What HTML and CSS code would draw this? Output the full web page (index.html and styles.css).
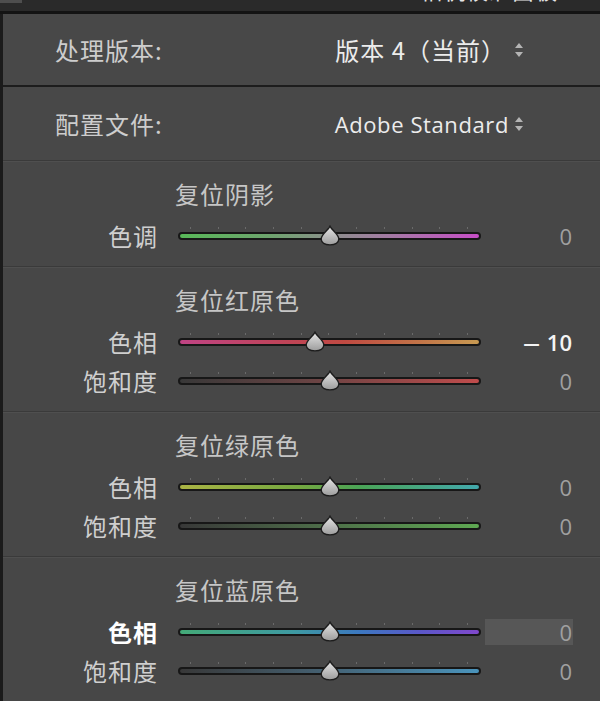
FILE: index.html
```html
<!DOCTYPE html>
<html lang="zh-CN">
<head>
<meta charset="utf-8">
<title>校准</title>
<link rel="stylesheet" href="styles.css">
</head>
<body>
<div class="app">
  <header class="topbar">
    <span class="corner"></span>
    <span class="top-title">相机校准面板</span>
  </header>
  <div class="panel">
    <div class="setting first">
      <span class="setting-label">处理版本:</span>
      <span class="setting-value">版本 4（当前）<svg class="updown" viewBox="0 0 10 16" width="10" height="16"><path d="M5 1 L9 6 H1 Z M5 15 L9 10 H1 Z" fill="#b4b4b4"/></svg></span>
    </div>
    <div class="setting second">
      <span class="setting-label">配置文件:</span>
      <span class="setting-value latin">Adobe Standard<svg class="updown tight" viewBox="0 0 10 16" width="10" height="16"><path d="M5 1 L9 6 H1 Z M5 15 L9 10 H1 Z" fill="#b4b4b4"/></svg></span>
    </div>

    <section class="group g1">
      <div class="group-title">复位阴影</div>
      <div class="row">
        <span class="label">色调</span>
        <div class="slider">
          <div class="ticks"><i></i><i></i><i></i><i></i><i></i><i></i><i></i><i></i><i></i><i></i><i></i></div>
          <div class="track tint">
            <svg class="thumb" style="left:50%" viewBox="0 0 22 21" width="22" height="21"><defs><linearGradient id="tg1" x1="0" y1="0" x2="0" y2="1"><stop offset="0" stop-color="#e6e6e6"/><stop offset="1" stop-color="#9c9c9c"/></linearGradient></defs><path d="M11 1.2 C12.6 5 19.8 9.2 19.8 14 C19.8 17.6 16 19.8 11 19.8 C6 19.8 2.2 17.6 2.2 14 C2.2 9.2 9.4 5 11 1.2 Z" fill="url(#tg1)" stroke="#1c1c1c" stroke-width="1.4"/></svg>
          </div>
        </div>
        <span class="value">0</span>
      </div>
    </section>

    <section class="group">
      <div class="group-title">复位红原色</div>
      <div class="row">
        <span class="label">色相</span>
        <div class="slider">
          <div class="ticks"><i></i><i></i><i></i><i></i><i></i><i></i><i></i><i></i><i></i><i></i><i></i></div>
          <div class="track red-hue">
            <svg class="thumb" style="left:45%" viewBox="0 0 22 21" width="22" height="21"><path d="M11 1.2 C12.6 5 19.8 9.2 19.8 14 C19.8 17.6 16 19.8 11 19.8 C6 19.8 2.2 17.6 2.2 14 C2.2 9.2 9.4 5 11 1.2 Z" fill="url(#tg1)" stroke="#1c1c1c" stroke-width="1.4"/></svg>
          </div>
        </div>
        <span class="value changed"><span class="minus">–</span>10</span>
      </div>
      <div class="row">
        <span class="label">饱和度</span>
        <div class="slider">
          <div class="ticks"><i></i><i></i><i></i><i></i><i></i><i></i><i></i><i></i><i></i><i></i><i></i></div>
          <div class="track red-sat">
            <svg class="thumb" style="left:50%" viewBox="0 0 22 21" width="22" height="21"><path d="M11 1.2 C12.6 5 19.8 9.2 19.8 14 C19.8 17.6 16 19.8 11 19.8 C6 19.8 2.2 17.6 2.2 14 C2.2 9.2 9.4 5 11 1.2 Z" fill="url(#tg1)" stroke="#1c1c1c" stroke-width="1.4"/></svg>
          </div>
        </div>
        <span class="value">0</span>
      </div>
    </section>

    <section class="group">
      <div class="group-title">复位绿原色</div>
      <div class="row">
        <span class="label">色相</span>
        <div class="slider">
          <div class="ticks"><i></i><i></i><i></i><i></i><i></i><i></i><i></i><i></i><i></i><i></i><i></i></div>
          <div class="track green-hue">
            <svg class="thumb" style="left:50%" viewBox="0 0 22 21" width="22" height="21"><path d="M11 1.2 C12.6 5 19.8 9.2 19.8 14 C19.8 17.6 16 19.8 11 19.8 C6 19.8 2.2 17.6 2.2 14 C2.2 9.2 9.4 5 11 1.2 Z" fill="url(#tg1)" stroke="#1c1c1c" stroke-width="1.4"/></svg>
          </div>
        </div>
        <span class="value">0</span>
      </div>
      <div class="row">
        <span class="label">饱和度</span>
        <div class="slider">
          <div class="ticks"><i></i><i></i><i></i><i></i><i></i><i></i><i></i><i></i><i></i><i></i><i></i></div>
          <div class="track green-sat">
            <svg class="thumb" style="left:50%" viewBox="0 0 22 21" width="22" height="21"><path d="M11 1.2 C12.6 5 19.8 9.2 19.8 14 C19.8 17.6 16 19.8 11 19.8 C6 19.8 2.2 17.6 2.2 14 C2.2 9.2 9.4 5 11 1.2 Z" fill="url(#tg1)" stroke="#1c1c1c" stroke-width="1.4"/></svg>
          </div>
        </div>
        <span class="value">0</span>
      </div>
    </section>

    <section class="group">
      <div class="group-title">复位蓝原色</div>
      <div class="row">
        <span class="label active">色相</span>
        <div class="slider">
          <div class="ticks"><i></i><i></i><i></i><i></i><i></i><i></i><i></i><i></i><i></i><i></i><i></i></div>
          <div class="track blue-hue">
            <svg class="thumb" style="left:50%" viewBox="0 0 22 21" width="22" height="21"><path d="M11 1.2 C12.6 5 19.8 9.2 19.8 14 C19.8 17.6 16 19.8 11 19.8 C6 19.8 2.2 17.6 2.2 14 C2.2 9.2 9.4 5 11 1.2 Z" fill="url(#tg1)" stroke="#1c1c1c" stroke-width="1.4"/></svg>
          </div>
        </div>
        <span class="value field">0</span>
      </div>
      <div class="row">
        <span class="label">饱和度</span>
        <div class="slider">
          <div class="ticks"><i></i><i></i><i></i><i></i><i></i><i></i><i></i><i></i><i></i><i></i><i></i></div>
          <div class="track blue-sat">
            <svg class="thumb" style="left:50%" viewBox="0 0 22 21" width="22" height="21"><path d="M11 1.2 C12.6 5 19.8 9.2 19.8 14 C19.8 17.6 16 19.8 11 19.8 C6 19.8 2.2 17.6 2.2 14 C2.2 9.2 9.4 5 11 1.2 Z" fill="url(#tg1)" stroke="#1c1c1c" stroke-width="1.4"/></svg>
          </div>
        </div>
        <span class="value">0</span>
      </div>
    </section>
  </div>
</div>
</body>
</html>
```
FILE: styles.css
```css
html, body {
  margin: 0;
  padding: 0;
  background: #474747;
}
body {
  width: 600px;
  height: 701px;
  overflow: hidden;
  font-family: "Noto Sans CJK SC", "Noto Sans", sans-serif;
}
.app {
  display: flex;
  flex-direction: column;
  height: 701px;
}
.topbar {
  height: 13px;
  background: #2a2a2a;
  border-bottom: 3px solid #131313;
  display: flex;
  align-items: flex-start;
  overflow: hidden;
}
.corner {
  width: 22px;
  height: 3px;
  background: #4e4e4e;
}
.top-title {
  margin-left: 398px;
  margin-top: -23px;
  font-size: 22px;
  line-height: 24px;
  color: #e6e6e6;
  letter-spacing: 1px;
}
.panel {
  flex: 1;
  background: #474747;
  border-left: 3px solid #1b1b1b;
}
.setting {
  display: flex;
  align-items: center;
  justify-content: space-between;
  padding: 0 76px 0 52px;
  font-size: 24px;
  letter-spacing: 1px;
}
.setting.first {
  height: 71px;
  border-bottom: 2px solid #1d1d1d;
  background: #484848;
}
.setting.second {
  height: 73px;
  background: #484848;
}
.setting-label {
  color: #cdcdcd;
}
.setting-value {
  color: #ececec;
  display: flex;
  align-items: center;
}
.setting-value.latin {
  font-family: "Open Sans", "Noto Sans", sans-serif;
  font-size: 22px;
  letter-spacing: 0.6px;
}
.updown {
  margin-left: 8px;
}
.updown.tight {
  margin-left: 5px;
}
.group {
  border-top: 1px solid #3a3a3a;
  box-shadow: inset 0 1px 0 #4f4f4f;
  padding: 20px 0 11px;
}
.group-title {
  padding-left: 172px;
  font-size: 24px;
  line-height: 26px;
  color: #c6c6c6;
  margin-bottom: 9px;
  letter-spacing: 1px;
}
.row {
  display: flex;
  align-items: center;
  height: 39px;
}
.label {
  width: 155px;
  margin-right: 20px;
  text-align: right;
  font-size: 24px;
  color: #cfcfcf;
  letter-spacing: 1px;
}
.label.active {
  color: #ffffff;
  font-weight: 700;
}
.slider {
  width: 303px;
  display: flex;
  flex-direction: column;
  justify-content: center;
}
.ticks {
  display: flex;
  justify-content: space-between;
  padding: 0 13px 0 12px;
  height: 2px;
  margin-bottom: 3px;
}
.ticks i {
  width: 1px;
  height: 2px;
  background: #6a6a6a;
}
.track {
  position: relative;
  height: 4px;
  border: 2px solid #171717;
  border-radius: 5px;
  margin-bottom: 5px;
}
.thumb {
  position: absolute;
  top: 50%;
  transform: translate(-50%, -52%);
}
.tint {
  background: linear-gradient(90deg, #58b858 0%, #6ea46e 30%, #8a8f8a 50%, #a47aa4 70%, #c64ec6 100%);
}
.red-hue {
  background: linear-gradient(90deg, #c04484 0%, #bf4458 35%, #c04a42 55%, #c27448 80%, #c89a52 100%);
}
.red-sat {
  background: linear-gradient(90deg, #383838 0%, #6a4444 45%, #c04c4c 100%);
}
.green-hue {
  background: linear-gradient(90deg, #aab444 0%, #74a840 40%, #4aa456 60%, #42a8ac 100%);
}
.green-sat {
  background: linear-gradient(90deg, #383838 0%, #4c6a48 45%, #5ea852 100%);
}
.blue-hue {
  background: linear-gradient(90deg, #44aa78 0%, #3e9aa2 38%, #3c78c0 60%, #5a58c8 80%, #8048cc 100%);
}
.blue-sat {
  background: linear-gradient(90deg, #383838 0%, #445e6e 45%, #4a94bc 100%);
}
.value {
  width: 87px;
  margin-left: 4px;
  padding-right: 1px;
  text-align: right;
  font-family: "Open Sans", "Noto Sans", sans-serif;
  font-size: 22px;
  color: #a0a0a0;
  line-height: 26px;
}
.value.changed {
  color: #f4f4f4;
  font-weight: 600;
}
.minus {
  display: inline-block;
  transform: scaleX(1.6);
  margin-right: 10px;
}
.value.field {
  background: #575757;
}
```
